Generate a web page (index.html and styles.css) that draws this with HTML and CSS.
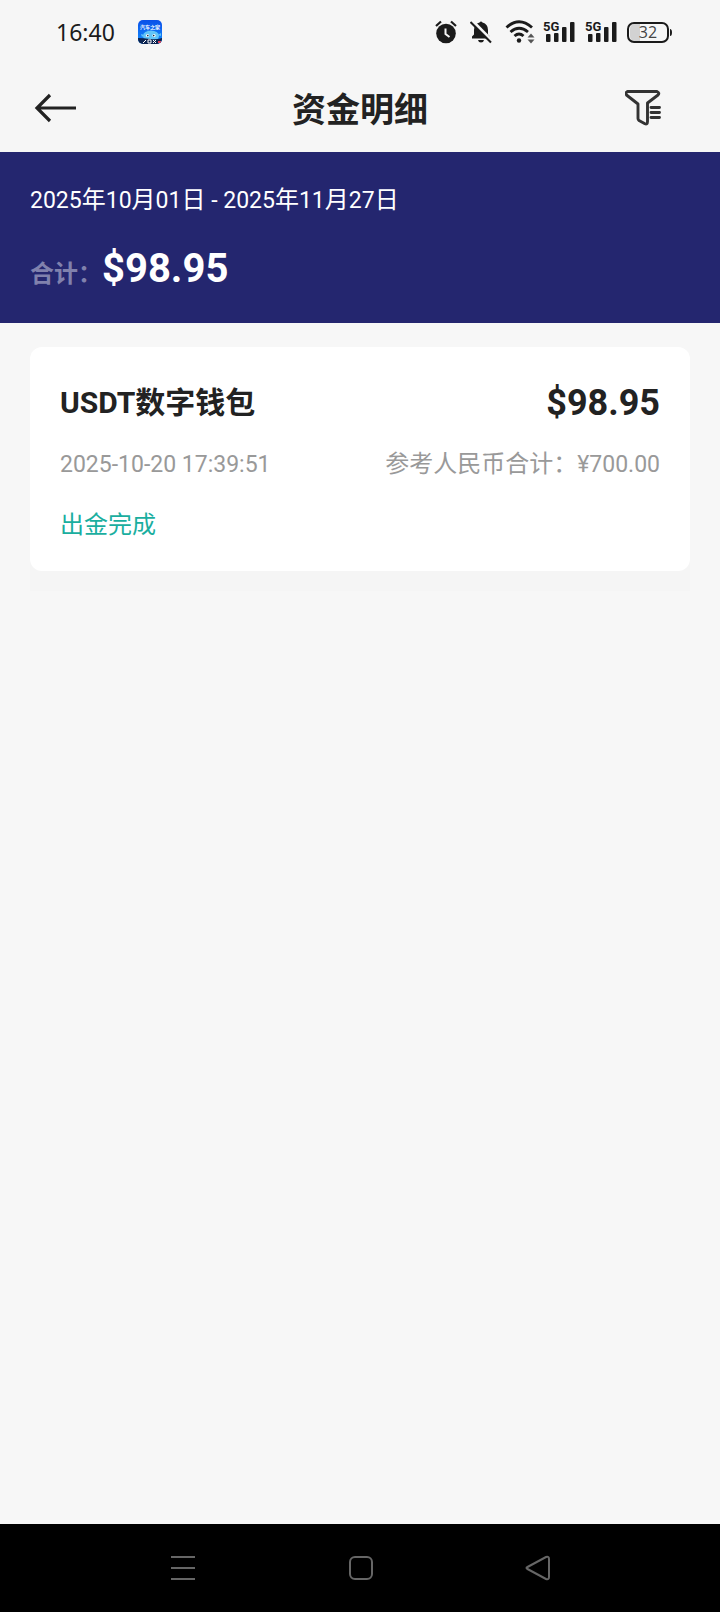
FILE: index.html
```html
<!DOCTYPE html>
<html lang="zh-CN">
<head>
<meta charset="utf-8">
<meta name="viewport" content="width=device-width, initial-scale=1">
<title>资金明细</title>
<link rel="stylesheet" href="styles.css">
</head>
<body>
<div class="status-bar">
  <div class="status-left">
    <time class="clock">16:40</time>
    <svg class="app-icon" width="24" height="24" viewBox="0 0 24 24" role="img" aria-label="汽车之家">
      <defs>
        <clipPath id="app-shape"><rect width="24" height="24" rx="5"/></clipPath>
        <linearGradient id="app-sky" x2="0" y2="1"><stop offset="0" stop-color="#0b50e8"/><stop offset="1" stop-color="#1290ff"/></linearGradient>
      </defs>
      <g clip-path="url(#app-shape)">
        <rect width="24" height="24" fill="url(#app-sky)"/>
        <ellipse cx="13" cy="16" rx="8" ry="5.500" fill="#62c5f7"/>
        <path d="M3 14l3 1-2 2zM23 13l-3 2 3 1z" fill="#62c5f7"/>
        <circle cx="9.500" cy="15.500" r="1.600" fill="#fff"/><circle cx="16" cy="15.500" r="1.600" fill="#fff"/>
        <circle cx="9.800" cy="15.600" r=".8" fill="#123"/><circle cx="15.700" cy="15.600" r=".8" fill="#123"/>
        <path d="M0 18q6 0 12 1t12-1v6H0z" fill="#0b2350"/>
        <path d="M5 23l3-3M10 20h3v3h-3zM15 20l3 3M18 20l-3 3" stroke="#fff" stroke-width="1" fill="none"/>
        <path d="M20 22h3" stroke="#e3405a" stroke-width="2"/>
        <text class="app-name" x="12" y="9" text-anchor="middle">汽车之家</text>
      </g>
    </svg>
  </div>
  <div class="status-icons">
    <svg width="25" height="24" viewBox="0 0 25 24" aria-hidden="true">
      <circle cx="11" cy="13.500" r="9.800" fill="#1b1b1b"/>
      <path d="M1 6L6 1.500M21 6L16 1.500" stroke="#1b1b1b" stroke-width="2.200" fill="none"/>
      <path d="M10.500 8.500v5.500l4 3" stroke="#f6f6f6" stroke-width="2" fill="none"/>
    </svg>
    <svg width="25" height="24" viewBox="0 0 25 24" aria-hidden="true">
      <path d="M2 18.500v-2l2-2V10q0-6 5.500-7.500Q11 .5 12.500 2.500 18 4 18 10v4.500l2 2v2zM8 20h6q-.5 2.500-3 2.500T8 20z" fill="#1b1b1b"/>
      <path d="M2 .5l21 21" stroke="#f6f6f6" stroke-width="3"/>
      <path d="M.5 2l20.500 20.500" stroke="#1b1b1b" stroke-width="2"/>
    </svg>
    <svg class="wifi" width="28" height="24" viewBox="0 0 28 24" aria-hidden="true">
      <g stroke="#1b1b1b" stroke-width="2.900" fill="none">
        <path d="M1.500 7.500Q14-4 27 7.500"/><path d="M5.500 12Q14 4.500 23 12"/><path d="M9.500 16q4.500-4 9 0"/>
      </g>
      <circle cx="14" cy="20.500" r="2.200" fill="#1b1b1b"/>
      <path d="M22.500 17.500l3.500-4 3.500 4zM22.500 19.500l3.500 4 3.500-4z" fill="#555"/>
    </svg>
    <svg class="signal" width="32" height="24" viewBox="0 0 32 24" role="img" aria-label="5G">
      <g fill="#1b1b1b"><rect x="3" y="14" width="4.500" height="8" rx="1"/><rect x="11" y="13" width="4.500" height="9" rx="1"/><rect x="19" y="7" width="4.500" height="15" rx="1"/><rect x="27" y="2" width="4.500" height="20" rx="1"/></g>
      <text class="network" x="0" y="11">5G</text>
    </svg>
    <svg class="signal" width="32" height="24" viewBox="0 0 32 24" role="img" aria-label="5G">
      <g fill="#1b1b1b"><rect x="3" y="14" width="4.500" height="8" rx="1"/><rect x="11" y="13" width="4.500" height="9" rx="1"/><rect x="19" y="7" width="4.500" height="15" rx="1"/><rect x="27" y="2" width="4.500" height="20" rx="1"/></g>
      <text class="network" x="0" y="11">5G</text>
    </svg>
    <svg width="45" height="24" viewBox="0 0 45 24" role="img" aria-label="32%">
      <path d="M8 4h5v17H8q-5 0-5-5V9q0-5 5-5z" fill="#d2d2d2"/>
      <rect x="1" y="3" width="40" height="19" rx="6" fill="none" stroke="#1b1b1b" stroke-width="2"/>
      <path d="M43 9q2 0 2 3.500T43 16z" fill="#1b1b1b"/>
      <text class="battery" x="21" y="18" text-anchor="middle">32</text>
    </svg>
  </div>
</div>

<header class="header">
  <button class="icon-button" type="button" aria-label="返回">
    <svg width="44" height="32" viewBox="0 0 44 32"><path d="M16 3L3 16l13 13M2.500 16H42" fill="none" stroke="#222" stroke-width="3.200"/></svg>
  </button>
  <h1 class="title">资金明细</h1>
  <button class="icon-button icon-button-end" type="button" aria-label="筛选">
    <svg width="36" height="36" viewBox="0 0 36 36"><path d="M2.500 1.500h29.500q3 1.500 1 3.500L22.500 13v18.500q0 3.500-3 2L14 30.500q-1-1-1-2V14L1.500 5q-1.500-2 1-3.500zM26 17.500h8.500M26 22.500h8.500M26 27.500h8.500" fill="none" stroke="#333" stroke-width="2.900" stroke-linecap="round" stroke-linejoin="round"/></svg>
  </button>
</header>

<section class="summary">
  <p class="range"><span class="num">2025</span>年<span class="num">10</span>月<span class="num">01</span>日<span class="num"> - 2025</span>年<span class="num">11</span>月<span class="num">27</span>日</p>
  <p class="total"><span class="total-label">合计：</span><strong class="total-value">$98.95</strong></p>
</section>

<main class="list">
  <div class="item">
    <article class="card">
      <div class="row row-main"><h2 class="name">USDT数字钱包</h2><strong class="amount">$98.95</strong></div>
      <div class="row row-meta"><time class="num">2025-10-20 17:39:51</time><span>参考人民币合计：<span class="num">¥700.00</span></span></div>
      <p class="state">出金完成</p>
    </article>
  </div>
</main>

<nav class="system-nav">
  <button class="nav-button" type="button" aria-label="最近任务"><svg width="26" height="26" viewBox="0 0 26 26"><path d="M1 2h24M1 13h24M1 24h24"/></svg></button>
  <button class="nav-button" type="button" aria-label="主页"><svg width="26" height="26" viewBox="0 0 26 26"><rect x="2" y="2" width="22" height="22" rx="5"/></svg></button>
  <button class="nav-button" type="button" aria-label="返回"><svg width="26" height="26" viewBox="0 0 26 26"><path d="M2.500 12L21 2q3-1 3 2v18q0 3-3 2L2.500 14q-2-1 0-2z"/></svg></button>
</nav>
</body>
</html>
```
FILE: styles.css
```css
* {
  box-sizing: border-box;
}

body {
  margin: 0;
  min-height: 100vh;
  display: flex;
  flex-direction: column;
  background: #f7f7f7;
  color: #222;
  font-family: Roboto, "Noto Sans CJK SC", sans-serif;
  font-size: 24px;
  line-height: 32px;
}

h1, h2, p {
  margin: 0;
}

button {
  padding: 0;
  border: 0;
  background: none;
  display: flex;
}

svg {
  display: block;
}

.status-bar {
  display: flex;
  justify-content: space-between;
  align-items: center;
  height: 64px;
  padding: 0 48px 0 56px;
  background: #f6f6f6;
}

.status-left {
  display: flex;
  align-items: center;
  gap: 23px;
}

.clock {
  font-family: "Noto Sans", sans-serif;
  font-size: 23px;
  color: #1b1b1b;
}

.app-name {
  font: 700 5px "Noto Sans CJK SC", sans-serif;
  fill: #fff;
}

.status-icons {
  display: flex;
  align-items: center;
  gap: 10px;
}

.wifi,
.signal {
  overflow: visible;
}

.network {
  font: 700 13px Roboto, sans-serif;
  fill: #1b1b1b;
}

.battery {
  font: 400 16px "Open Sans", sans-serif;
  fill: #444;
}

.header {
  display: grid;
  grid-template-columns: 1fr auto 1fr;
  align-items: center;
  height: 88px;
  padding: 0 34px;
  background: #f6f6f6;
}

.icon-button-end {
  justify-self: end;
  margin-right: 25px;
}

.title {
  padding-top: 4px;
  font-size: 34px;
  line-height: 48px;
  font-weight: 700;
}

.summary {
  padding: 32px 30px 23px;
  background: #24266f;
  color: #fff;
}

.num {
  font-size: 23px;
  white-space: pre;
}

.total {
  display: flex;
  align-items: baseline;
  margin-top: 26px;
  line-height: 52px;
}

.total-label {
  font-weight: 700;
  color: #8081ad;
}

.total-value {
  font-size: 40px;
}

.list {
  flex: 1;
  padding: 24px 30px;
}

.item {
  padding-bottom: 20px;
  background: linear-gradient(#f7f7f7 50%, #f5f5f5 50%);
}

.card {
  padding: 32px 30px 30px;
  border-radius: 12px;
  background: #fff;
}

.row {
  display: flex;
  justify-content: space-between;
  align-items: baseline;
}

.row-main {
  align-items: center;
  line-height: 48px;
}

.name {
  font-size: 30px;
  font-weight: 700;
}

.amount {
  font-size: 36px;
}

.row-meta {
  margin-top: 21px;
  color: #999;
}

.state {
  margin-top: 28px;
  color: #1aae9f;
}

.system-nav {
  display: flex;
  justify-content: space-between;
  align-items: center;
  height: 88px;
  padding: 0 169px 0 170px;
  background: #000;
}

.nav-button svg {
  fill: none;
  stroke: #666;
  stroke-width: 2;
}
```
